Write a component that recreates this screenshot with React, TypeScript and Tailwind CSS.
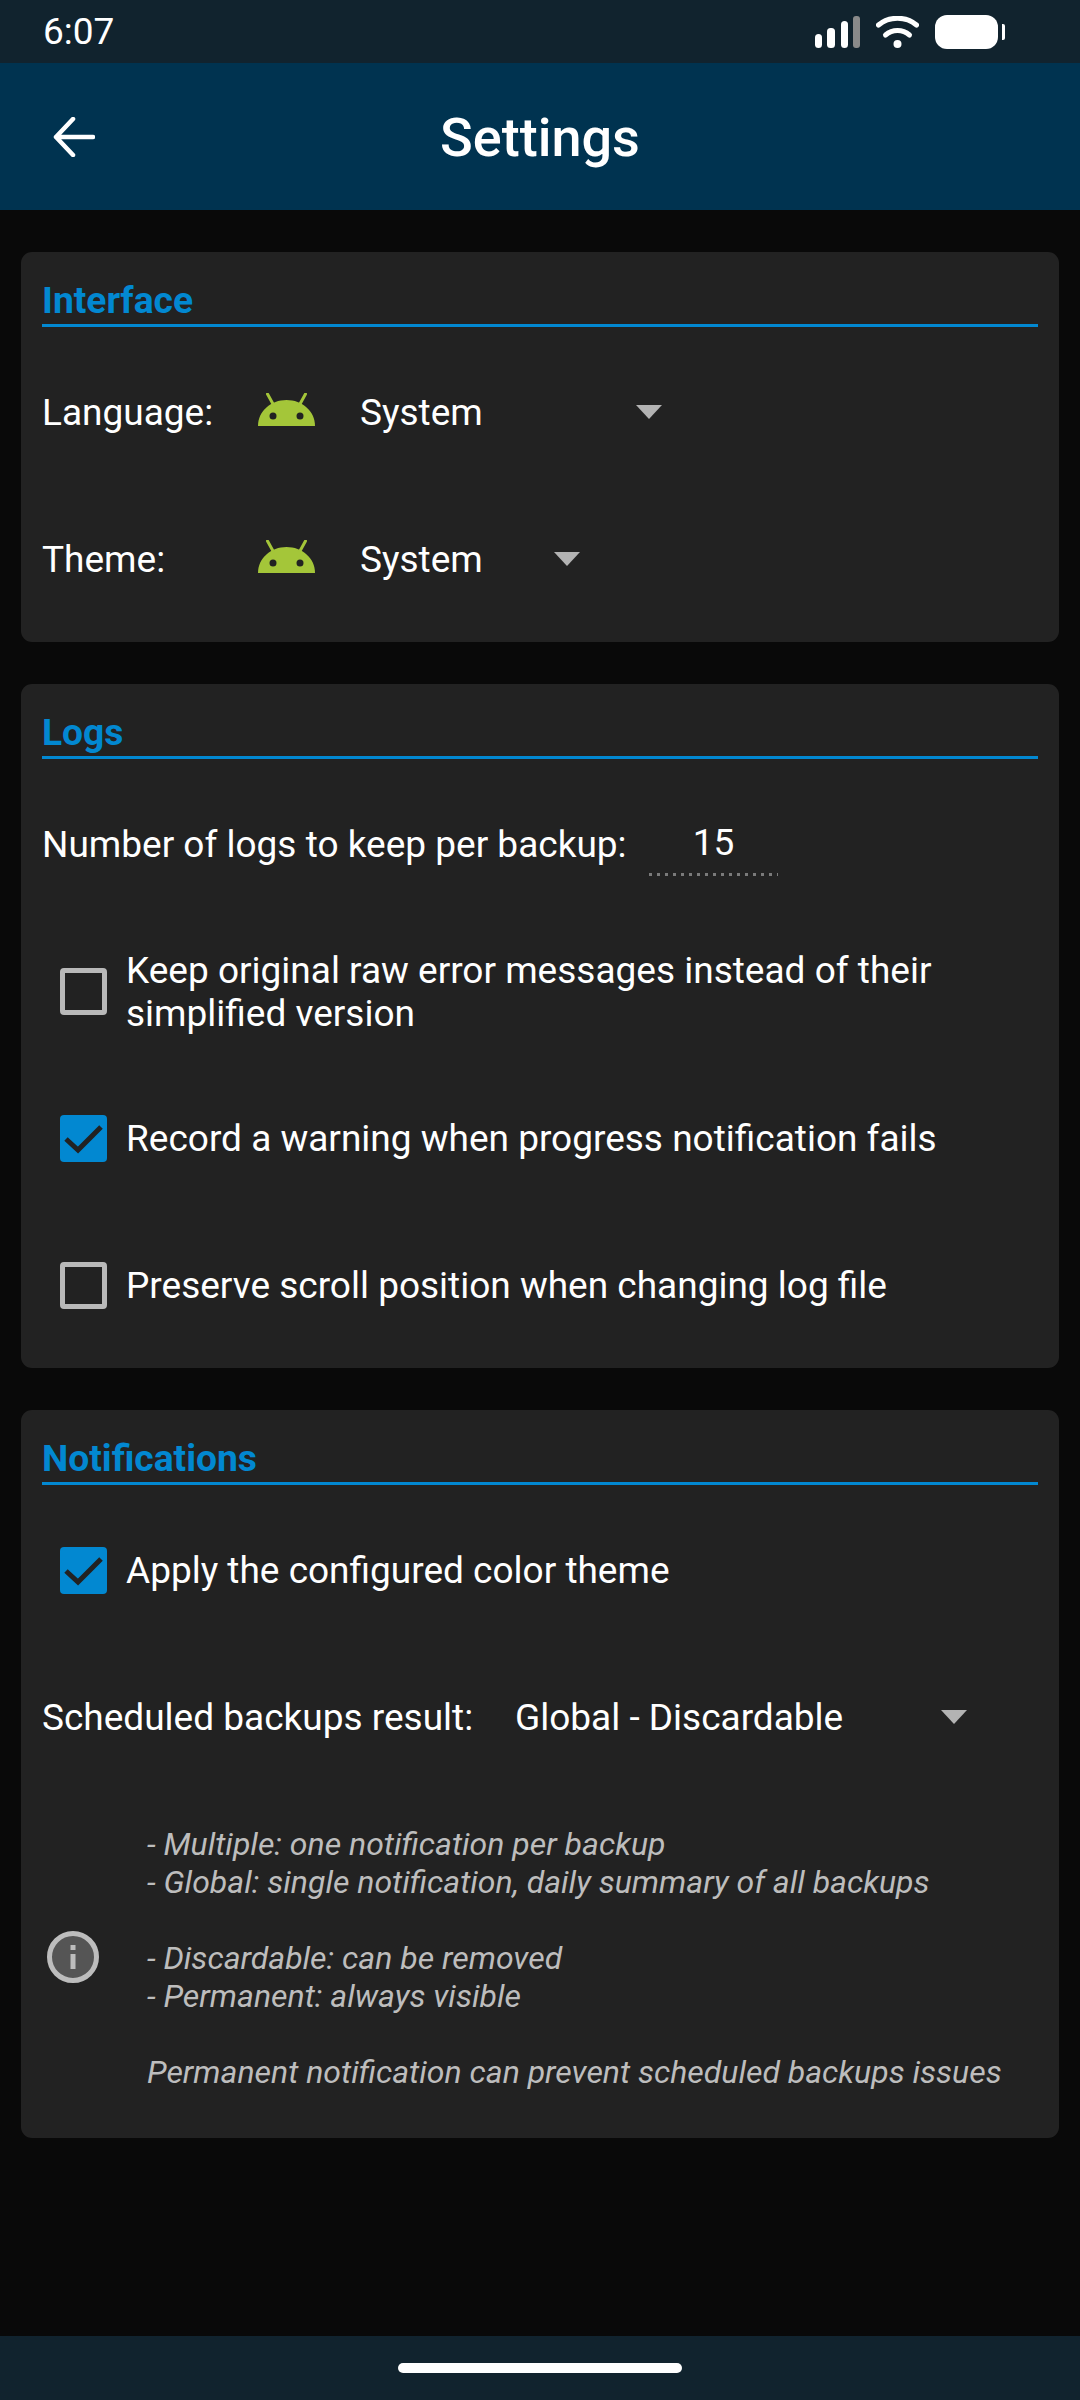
import React from "react";

const AndroidIcon = () => (
  <svg width="57" height="33" viewBox="0 0 57 33" className="shrink-0 ml-[1px] mt-[-6px]">
    <path d="M0 33C0 18 13 7 28.500 7S57 18 57 33z" fill="#a4c639" />
    <path d="M9.500 1L15 11M47.500 1L42 11" stroke="#a4c639" strokeWidth="3" strokeLinecap="round" />
    <circle cx="15" cy="23" r="3.500" fill="#222222" />
    <circle cx="42" cy="23" r="3.500" fill="#222222" />
  </svg>
);

const Caret = () => (
  <div className="w-0 h-0 mt-[-2px] border-l-[13px] border-r-[13px] border-t-[14px] border-l-transparent border-r-transparent border-t-[#b3b3b3]" />
);

const Section = ({ title, children }: { title: string; children: React.ReactNode }) => (
  <section className="bg-[#222222] rounded-[11px] px-[21px] pb-[9px]">
    <h2 className="pt-[27px] h-[75px] border-b-[3px] border-[#0288d1] text-[#0288d1] text-[37.2px] leading-[43px] font-bold">
      {title}
    </h2>
    <div className="pt-[12px]">{children}</div>
  </section>
);

const Picker = ({ label, textWidth }: { label: string; textWidth: string }) => (
  <div className="flex items-center h-[147px]">
    <span className="w-[215px]">{label}</span>
    <AndroidIcon />
    <span className={"ml-[45px] " + textWidth}>System</span>
    <Caret />
  </div>
);

const Check = ({ checked, children }: { checked?: boolean; children: React.ReactNode }) => (
  <div className="flex items-center h-[147px] pl-[18px] leading-[43px]">
    {checked ? (
      <div className="w-[47px] h-[47px] rounded-[4px] bg-[#0288d1] shrink-0">
        <svg width="47" height="47" viewBox="0 0 47 47">
          <path d="M6 24l12 11L41 12" fill="none" stroke="#222222" strokeWidth="5" />
        </svg>
      </div>
    ) : (
      <div className="w-[47px] h-[47px] rounded-[4px] border-[5px] border-[#b9b9b9] shrink-0" />
    )}
    <div className="ml-[19px]">{children}</div>
  </div>
);

export default function App() {
  return (
    <div
      className="w-[1080px] h-[2400px] bg-[#090909] text-white text-[37px] flex flex-col overflow-hidden"
      style={{ fontFamily: "Roboto, sans-serif" }}
    >
      <div className="h-[63px] bg-[#11232e] flex items-center justify-between pl-[43px] pr-[75px] shrink-0">
        <span className="leading-none">6:07</span>
        <div className="flex items-center">
          <svg width="45" height="32" viewBox="0 0 45 32">
            <rect x="0" y="18" width="7" height="14" rx="3.500" fill="#fff" />
            <rect x="12" y="12" width="8" height="20" rx="3.500" fill="#fff" />
            <rect x="26" y="5" width="7" height="27" rx="3.500" fill="#fff" />
            <rect x="38" y="0" width="7" height="32" rx="3" fill="#8a8a8a" />
          </svg>
          <svg width="43" height="32" viewBox="0 0 43 32" fill="none" stroke="#fff" strokeLinecap="round" className="ml-[16px]">
            <path d="M2.500 9C13 0 30 0 40.500 9" strokeWidth="5" />
            <path d="M9.500 19c7-6 17-6 24 0" strokeWidth="5" />
            <circle cx="21.500" cy="28" r="4" fill="#fff" stroke="none" />
          </svg>
          <div className="w-[63px] h-[34px] bg-white rounded-[12px] ml-[16px]" />
          <div className="w-[3px] h-[16px] bg-white rounded-r-[2px] ml-[4px]" />
        </div>
      </div>
      <header className="h-[147px] bg-[#003350] flex items-center relative shrink-0">
        <svg width="42" height="40" viewBox="0 0 42 40" fill="none" stroke="#fff" strokeWidth="4.500" strokeLinecap="round" strokeLinejoin="round" className="ml-[53px]">
          <path d="M40 20H3M20 2L3 20l17 18" />
        </svg>
        <h1 className="absolute inset-x-0 text-center text-[54px] font-medium mt-[2px]">Settings</h1>
      </header>
      <main className="px-[21px] pt-[42px] flex flex-col gap-[42px] flex-1">
        <Section title="Interface">
          <Picker label="Language:" textWidth="w-[276px]" />
          <Picker label="Theme:" textWidth="w-[194px]" />
        </Section>
        <Section title="Logs">
          <div className="flex items-center h-[147px]">
            <span className="w-[607px]">Number of logs to keep per backup:</span>
            <div className="w-[129px] mt-[7px]">
              <div className="text-center leading-[44px]">15</div>
              <div className="h-[3px] mt-[8px] bg-[repeating-linear-gradient(90deg,#7a7a7a_0_3px,transparent_3px_8px)]" />
            </div>
          </div>
          <Check>
            Keep original raw error messages instead of their
            <br />
            simplified version
          </Check>
          <Check checked>Record a warning when progress notification fails</Check>
          <Check>Preserve scroll position when changing log file</Check>
        </Section>
        <Section title="Notifications">
          <Check checked>Apply the configured color theme</Check>
          <div className="flex items-center h-[147px]">
            <span className="w-[473px]">Scheduled backups result:</span>
            <span className="w-[426px]">Global - Discardable</span>
            <Caret />
          </div>
          <div className="flex items-center mt-[34px] pb-[38px]">
            <svg width="52" height="52" viewBox="0 0 52 52" className="ml-[5px] mt-[-2px] shrink-0">
              <circle cx="26" cy="26" r="23.500" fill="#555555" stroke="#bdbdbd" strokeWidth="5" />
              <rect x="23.500" y="23" width="5" height="15" fill="#bdbdbd" />
              <rect x="23.500" y="14" width="5" height="5" fill="#bdbdbd" />
            </svg>
            <div className="ml-[48px] text-[32px] leading-[38px] italic text-[#bdbdbd]">
              <div>- Multiple: one notification per backup</div>
              <div>- Global: single notification, daily summary of all backups</div>
              <div className="h-[38px]" />
              <div>- Discardable: can be removed</div>
              <div>- Permanent: always visible</div>
              <div className="h-[38px]" />
              <div>Permanent notification can prevent scheduled backups issues</div>
            </div>
          </div>
        </Section>
      </main>
      <footer className="h-[64px] bg-[#11232e] flex items-center justify-center shrink-0">
        <div className="w-[284px] h-[10px] rounded-full bg-white" />
      </footer>
    </div>
  );
}
